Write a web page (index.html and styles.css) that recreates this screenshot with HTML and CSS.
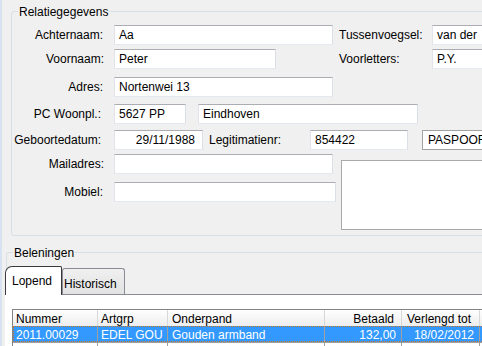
FILE: index.html
```html
<!DOCTYPE html>
<html lang="nl">
<head>
<meta charset="utf-8">
<title>Relatie</title>
<link rel="stylesheet" href="styles.css">
</head>
<body>
<div class="win">
  <section class="group g1">
    <span class="legend">Relatiegegevens</span>
    <div class="row">
      <span class="lbl">Achternaam:</span>
      <span class="tb w219">Aa</span>
      <span class="lbl2 ml6">Tussenvoegsel:</span>
      <span class="tb w100">van der</span>
    </div>
    <div class="row mt4">
      <span class="lbl lbl-r2">Voornaam:</span>
      <span class="tb w162">Peter</span>
      <span class="lbl2 ml63">Voorletters:</span>
      <span class="tb w100">P.Y.</span>
    </div>
    <div class="row mt8">
      <span class="lbl">Adres:</span>
      <span class="tb w219">Nortenwei 13</span>
    </div>
    <div class="row mt7">
      <span class="lbl lbl-r1">PC Woonpl.:</span>
      <span class="tb w72">5627 PP</span>
      <span class="tb w220 ml12">Eindhoven</span>
    </div>
    <div class="row mt6">
      <span class="lbl lbl-r1">Geboortedatum:</span>
      <span class="tb w89 right">29/11/1988</span>
      <span class="lbl3 ml6">Legitimatienr:</span>
      <span class="tb w98">854422</span>
      <span class="combo ml14">PASPOORT</span>
    </div>
    <div class="lower mt4">
      <div class="lcol">
        <div class="row">
          <span class="lbl lbl-r2">Mailadres:</span>
          <span class="tb w219"></span>
        </div>
        <div class="row mt8">
          <span class="lbl">Mobiel:</span>
          <span class="tb w222"></span>
        </div>
      </div>
      <div class="memo"></div>
    </div>
  </section>

  <section class="group g2">
    <span class="legend">Beleningen</span>
    <div class="tabs">
      <div class="tab tab-sel">Lopend</div>
      <div class="tab tab-off">Historisch</div>
    </div>
    <div class="panel">
      <div class="grid">
        <div class="ghead">
          <div class="c c1">Nummer</div>
          <div class="c c2">Artgrp</div>
          <div class="c c3">Onderpand</div>
          <div class="c c4 hr">Betaald</div>
          <div class="c c5 h5">Verlengd tot</div>
          <div class="c c6"></div>
        </div>
        <div class="grow sel">
          <div class="c c1">2011.00029</div>
          <div class="c c2">EDEL GOU</div>
          <div class="c c3">Gouden armband</div>
          <div class="c c4 rr">132,00</div>
          <div class="c c5 rr">18/02/2012</div>
          <div class="c c6"></div>
        </div>
        <div class="grow">
          <div class="c c1"></div>
          <div class="c c2"></div>
          <div class="c c3"></div>
          <div class="c c4"></div>
          <div class="c c5"></div>
          <div class="c c6"></div>
        </div>
      </div>
    </div>
  </section>
</div>
</body>
</html>
```
FILE: styles.css
```css
* { box-sizing: border-box; }
html, body { margin: 0; padding: 0; }
body {
  width: 482px;
  height: 346px;
  overflow: hidden;
  background: #f0f0f0;
  font-family: "Liberation Sans", Arial, sans-serif;
  font-size: 12px;
  color: #000;
}
.win {
  height: 346px;
  overflow: hidden;
  border-left: 2px solid #d6e2f2;
  padding-top: 11px;
}
.group {
  position: relative;
  border: 1px solid #d5dfe5;
  border-radius: 3px;
}
.legend {
  position: absolute;
  top: -7px;
  left: 6px;
  padding: 0 1px;
  background: #f0f0f0;
  line-height: 14px;
  white-space: nowrap;
}
.g1 {
  margin-left: 9px;
  width: 520px;
  height: 225px;
  padding-top: 13px;
}
.row {
  display: flex;
  align-items: center;
  height: 20px;
}
.lbl {
  flex: none;
  width: 91px;
  margin-right: 11px;
  text-align: right;
  white-space: nowrap;
  line-height: 14px;
}
.lbl-r1 { padding-right: 2px; }
.lbl-r2 { margin-right: 10px; width: 92px; }
.lbl2 {
  flex: none;
  width: 93px;
  white-space: nowrap;
  line-height: 14px;
}
.lbl3 {
  flex: none;
  width: 101px;
  white-space: nowrap;
  line-height: 14px;
}
.tb {
  flex: none;
  height: 20px;
  background: #fff;
  border: 1px solid;
  border-color: #abadb3 #dbdfe6 #e3e9ef #e2e3ea;
  padding: 0 4px;
  line-height: 18px;
  white-space: nowrap;
  overflow: hidden;
}
.tb.right { text-align: right; padding-right: 7px; }
.combo {
  flex: none;
  width: 100px;
  height: 20px;
  background: #fff;
  border: 1px solid #a2a2a2;
  padding: 0 5px;
  line-height: 18px;
  white-space: nowrap;
  overflow: hidden;
}
.w72 { width: 72px; }
.w89 { width: 89px; }
.w98 { width: 98px; }
.w100 { width: 100px; }
.w162 { width: 162px; }
.w219 { width: 219px; }
.w220 { width: 220px; }
.w222 { width: 222px; }
.ml6 { margin-left: 6px; }
.ml12 { margin-left: 12px; }
.ml14 { margin-left: 14px; }
.ml63 { margin-left: 63px; }
.mt4 { margin-top: 4px; }
.mt6 { margin-top: 6px; }
.mt7 { margin-top: 7px; }
.mt8 { margin-top: 8px; }
.lower {
  display: flex;
  align-items: flex-start;
}
.lcol {
  flex: none;
  width: 324px;
}
.memo {
  flex: none;
  width: 200px;
  height: 70px;
  margin-left: 5px;
  margin-top: 6px;
  background: #fff;
  border: 1px solid #a9a9a9;
}
.g2 {
  margin-left: 4px;
  margin-top: 16px;
  width: 520px;
  height: 200px;
  padding-top: 13px;
}
.tabs {
  display: flex;
  align-items: flex-end;
  margin-left: -2px;
  height: 28px;
}
.tab {
  flex: none;
  line-height: 14px;
  white-space: nowrap;
  border: 1px solid #898c95;
  border-bottom: none;
}
.tab-sel {
  position: relative;
  z-index: 1;
  width: 57px;
  height: 29px;
  margin-bottom: -1px;
  background: #fff;
  border-color: #3a3a3a;
  border-radius: 7px 2px 0 0;
  padding: 7px 0 0 6px;
}
.tab-off {
  width: 63px;
  height: 26px;
  margin-left: 0;
  background: linear-gradient(#f0f0f0, #e2e2e2);
  border-radius: 3px 3px 0 0;
  padding: 8px 0 0 1px;
}
.panel {
  margin-left: -2px;
  height: 80px;
  background: #fff;
  border-top: 1px solid #898c95;
  padding: 14px 0 0 7px;
}
.grid {
  width: 520px;
  border: 1px solid #838383;
  border-right: none;
  border-bottom: none;
}
.ghead {
  display: flex;
  height: 16px;
  background: linear-gradient(#ffffff, #ededed);
}
.ghead .c {
  height: 16px;
  border-right: 1px solid #d8d8d8;
  padding-top: 2px;
  line-height: 14px;
}
.grow {
  position: relative;
  display: flex;
  height: 17px;
  background: #fff;
}
.grow .c {
  height: 17px;
  border-right: 1px solid #a0a0a0;
  border-bottom: 1px solid #a0a0a0;
  padding-top: 2px;
  line-height: 14px;
}
.grow.sel { background: #3399ff; color: #fff; }
.grow.sel::after {
  content: "";
  position: absolute;
  left: 0;
  top: 0;
  right: 0;
  bottom: 1px;
  border: 1px dotted #c8742a;
  pointer-events: none;
}
.c {
  flex: none;
  padding-left: 3px;
  padding-right: 3px;
  white-space: nowrap;
  overflow: hidden;
}
.c1 { width: 85px; }
.c2 { width: 70px; }
.c3 { width: 157px; padding-left: 4px; }
.c4 { width: 77px; }
.c5 { width: 78px; }
.c6 { flex: 1; border-right: none !important; }
.hr { text-align: right; padding-right: 7px; }
.h5 { padding-left: 5px; }
.rr { text-align: right; padding-right: 5px; }
```
